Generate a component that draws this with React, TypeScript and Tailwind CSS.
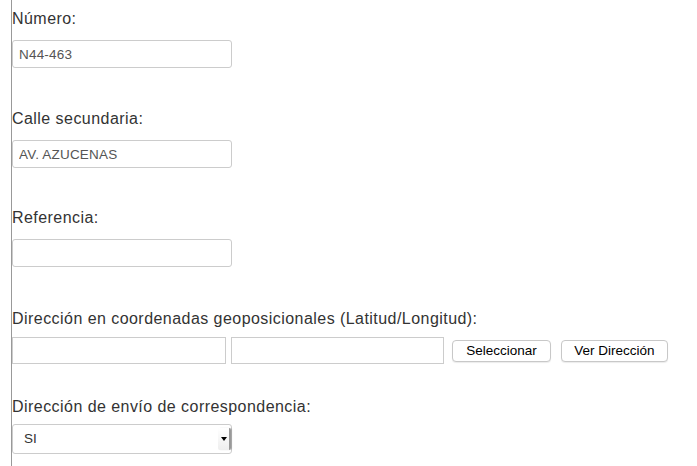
import React from 'react';

const font = { fontFamily: '"Liberation Sans", Arial, Helvetica, sans-serif' };

const Label = ({ children }: { children: React.ReactNode }) => (
  <label className="block text-[16px] leading-5 tracking-[0.45px] text-[#333]">{children}</label>
);

const Field = ({ label, value, className = '' }: { label: string; value?: string; className?: string }) => (
  <div className={className}>
    <Label>{label}</Label>
    <input
      type="text"
      defaultValue={value}
      className="mt-[11px] block h-[28px] w-[220px] rounded-[3px] border border-[#ccc] bg-white px-[6px] text-[13.5px] tracking-[0.2px] text-[#555] outline-none"
    />
  </div>
);

export default function App() {
  return (
    <div style={font} className="min-h-[466px] w-[697px] bg-white">
      <div className="ml-[11px] min-h-[466px] border-l border-[#999] pt-[9px]">
        <Field label="Número:" value="N44-463" />
        <Field label="Calle secundaria:" value="AV. AZUCENAS" className="mt-[41px]" />
        <Field label="Referencia:" className="mt-[40px]" />

        {/* Coordenadas */}
        <div className="mt-[42px]">
          <Label>Dirección en coordenadas geoposicionales (Latitud/Longitud):</Label>
          <div className="mt-[8px] flex items-center">
            <input type="text" className="h-[27px] w-[214px] border border-[#ccc] bg-white px-[6px] text-[13px] outline-none" />
            <input type="text" className="ml-[5px] h-[27px] w-[213px] border border-[#ccc] bg-white px-[6px] text-[13px] outline-none" />
            <button className="ml-[8px] h-[22px] w-[99px] rounded-[4px] border border-[#c8c8c8] bg-white text-[13.5px] text-black shadow-[0_1px_1px_rgba(0,0,0,0.08)]">
              Seleccionar
            </button>
            <button className="ml-[10px] h-[22px] w-[107px] rounded-[4px] border border-[#c8c8c8] bg-white text-[13.5px] text-black shadow-[0_1px_1px_rgba(0,0,0,0.08)]">
              Ver Dirección
            </button>
          </div>
        </div>

        {/* Correspondencia */}
        <div className="mt-[33px]">
          <Label>Dirección de envío de correspondencia:</Label>
          <div className="relative mt-[7px] h-[30px] w-[220px]">
            <select
              defaultValue="SI"
              className="block h-full w-full appearance-none rounded-[3px] border border-[#ccc] bg-white pl-[11px] text-[13.5px] text-[#333] outline-none"
            >
              <option>SI</option>
              <option>NO</option>
            </select>
            <span className="pointer-events-none absolute top-[4px] right-[1px] flex h-[22px] w-[13px] items-center justify-center rounded-[2px] border-r-2 border-[#999] bg-gradient-to-b from-white to-[#eee] shadow-[1px_0_1px_rgba(0,0,0,0.2)]">
              <span className="block h-0 w-0 border-x-[3px] border-t-[4px] border-x-transparent border-t-black" />
            </span>
          </div>
        </div>
      </div>
    </div>
  );
}
